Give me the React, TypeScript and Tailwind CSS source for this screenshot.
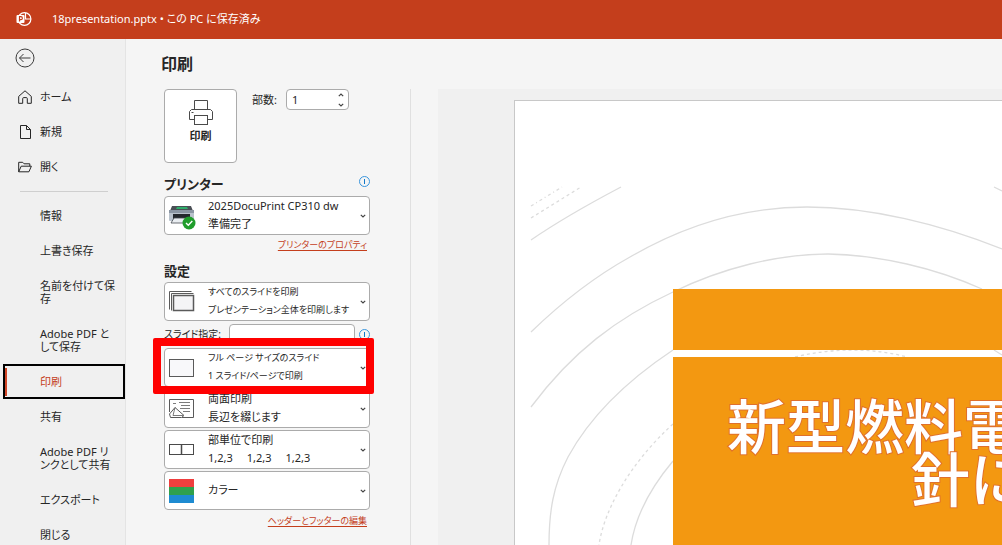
import { useId, useState, type ReactNode } from "react";

type NavEntry = { label: string; icon?: ReactNode };

const line = { fill: "none", stroke: "currentColor", strokeWidth: 1 } as const;

function AppLogo() {
  return (
    <svg width="16" height="16" viewBox="0 0 16 16" className="text-white" aria-hidden="true">
      <circle cx="8.500" cy="8" r="6.400" fill="none" stroke="currentColor" strokeWidth="1.200" />
      <path d="M9.500 2v6H15" fill="none" stroke="currentColor" strokeWidth="1.200" />
      <rect x="0.500" y="4" width="8" height="8" rx="1" fill="currentColor" />
      <path d="M3.500 10.500V5.700h1.400a1.400 1.400 0 0 1 0 2.900H3.500" fill="none" stroke="#c43e1c" strokeWidth="1.200" />
    </svg>
  );
}

function HomeIcon() {
  return (
    <svg width="16" height="16" viewBox="0 0 16 16" aria-hidden="true">
      <path {...line} d="M1.700 7.400 8 1.800l6.300 5.600v6.900h-4V9.600q0-1-1-1H6.700q-1 0-1 1v4.700h-4z" strokeLinejoin="round" />
    </svg>
  );
}

function NewIcon() {
  return (
    <svg width="16" height="16" viewBox="0 0 16 16" aria-hidden="true">
      <path {...line} d="M3.500 1.500h6l4 4v9h-10zM9.500 1.500v4h4" strokeLinejoin="round" />
    </svg>
  );
}

function OpenIcon() {
  return (
    <svg width="16" height="16" viewBox="0 0 16 16" aria-hidden="true">
      <path {...line} d="M1.700 12.800V3.300h4l1.400 1.500h5.700v2.400M1.700 12.800l2.500-5.600h10.200l-2.500 5.600z" strokeLinejoin="round" />
    </svg>
  );
}

function PrinterOutline() {
  return (
    <svg width="28" height="28" viewBox="0 0 28 28" className="text-[#4a4a4a]" aria-hidden="true">
      <path {...line} d="M7.500 10.500v-9h13v9" />
      <path {...line} d="M7.500 20.500h-5v-8l2-2h19l2 2v8h-5" />
      <rect {...line} x="7.500" y="16.500" width="13" height="9" />
      <path {...line} d="M4.500 13.500h2" />
    </svg>
  );
}

function PrinterDevice() {
  return (
    <svg width="28" height="28" viewBox="0 0 28 28" aria-hidden="true">
      <path d="M4 4h19l2 5H2z" fill="#4a4f55" />
      <path d="M9 5h10l1 2H8z" fill="#2fae6b" />
      <rect x="1" y="8" width="25" height="11" rx="1" fill="#b9c2cc" />
      <rect x="1" y="8" width="25" height="3" fill="#8b96a3" />
      <rect x="5" y="12" width="17" height="5" fill="#24282d" />
      <path d="M6 16h15l1 5H3z" fill="#e9edf1" stroke="#454a50" strokeWidth="0.800" />
      <circle cx="21" cy="21" r="6.500" fill="#1f9d2b" />
      <path d="m18 21 2.300 2.300 4-4.300" fill="none" stroke="#fff" strokeWidth="1.400" />
    </svg>
  );
}

function StackIcon() {
  return (
    <svg width="28" height="24" viewBox="0 0 28 24" className="text-[#5a5a5a]" aria-hidden="true">
      <path {...line} d="M1.500 19.500v-18h22M3.500 20.500v-17h22" />
      <rect x="5.500" y="5.500" width="20" height="15" fill="#f4f4f6" stroke="currentColor" strokeWidth="1.500" />
    </svg>
  );
}

function PageIcon() {
  return (
    <svg width="28" height="24" viewBox="0 0 28 24" className="text-[#5a5a5a]" aria-hidden="true">
      <rect x="1.500" y="3.500" width="24" height="17" fill="#f8f8fa" stroke="currentColor" />
    </svg>
  );
}

function DuplexIcon() {
  return (
    <svg width="28" height="24" viewBox="0 0 28 24" className="text-[#5a5a5a]" aria-hidden="true">
      <path {...line} d="M1.500 15V2.500h24v18H14" />
      <path {...line} d="m1.500 17 5.500-6.500 9 8-2.500 2h-11z" />
      <path {...line} d="m7 10.500-2 8 10 0" strokeWidth="0.800" />
      <path {...line} d="M5 6.500h3M11 5.500h11M13 8.500h9M12 11.500h10M15 14.500h7" strokeWidth="0.800" />
    </svg>
  );
}

function CollateIcon() {
  return (
    <svg width="28" height="24" viewBox="0 0 28 24" className="text-[#4a4a4a]" aria-hidden="true">
      <rect {...line} x="1.500" y="6.500" width="24" height="10" />
      <path d="M13.500 6v11" stroke="currentColor" strokeWidth="1.500" />
    </svg>
  );
}

function ColorIcon() {
  return (
    <svg width="28" height="28" viewBox="0 0 28 28" aria-hidden="true">
      <rect x="1" y="2" width="25" height="8" fill="#ef3e3e" />
      <rect x="1" y="10" width="25" height="8" fill="#2fa04c" />
      <rect x="1" y="18" width="25" height="8" fill="#1e8bd1" />
    </svg>
  );
}

function Chevron({ up = false }: { up?: boolean }) {
  return (
    <svg width="6" height="4" viewBox="0 0 6 4" className="text-[#444444]" aria-hidden="true">
      <path d={up ? "M.8 3.200 3 1l2.200 2.200" : "M.8.800 3 3 5.200.800"} fill="none" stroke="currentColor" strokeWidth="1.200" />
    </svg>
  );
}

function InfoButton({ label }: { label: string }) {
  return (
    <button type="button" aria-label={label} className="flex size-[11px] items-center justify-center rounded-full border border-[#3a96dd]">
      <span className="h-[5px] w-px bg-[#0f78c8]" />
    </button>
  );
}

function DropDown({
  name,
  value,
  detail,
  icon,
  dense = false,
  highlighted = false,
}: {
  name: string;
  value: string;
  detail?: ReactNode;
  icon: ReactNode;
  dense?: boolean;
  highlighted?: boolean;
}) {
  const id = useId();
  return (
    <div className={"relative grid grid-cols-1 " + (dense ? "text-[9px]" : "text-[11px]")}>
      <select
        aria-label={name}
        aria-describedby={detail ? id : undefined}
        className={
          "col-start-1 row-start-1 h-[39px] w-full min-w-0 appearance-none rounded border border-[#ababab] bg-white pr-4 pl-[43px] leading-4 text-[#262626] " +
          (detail ? "pb-[19px]" : "pb-[2px]")
        }
      >
        <option>{value}</option>
      </select>
      <div className="pointer-events-none col-start-1 row-start-1 flex min-w-0 pr-1 pl-1">
        <div className="flex w-10 items-center">{icon}</div>
        <div id={id} className="flex min-w-0 flex-1 items-end pb-[3px] leading-4 whitespace-nowrap">
          {detail}
        </div>
        <div className="flex items-center">
          <Chevron />
        </div>
      </div>
      {highlighted && (
        <div className="pointer-events-none absolute -top-[10px] -right-[4px] -bottom-[7px] -left-[11px] z-10 rounded-xs border-8 border-[#ff0000]" />
      )}
    </div>
  );
}

const topNav: NavEntry[] = [
  { label: "ホーム", icon: <HomeIcon /> },
  { label: "新規", icon: <NewIcon /> },
  { label: "開く", icon: <OpenIcon /> },
];

const fileNav: NavEntry[] = [
  { label: "情報" },
  { label: "上書き保存" },
  { label: "名前を付けて保存" },
  { label: "Adobe PDF として保存" },
  { label: "印刷" },
  { label: "共有" },
  { label: "Adobe PDF リンクとして共有" },
  { label: "エクスポート" },
  { label: "閉じる" },
];

function Sidebar() {
  return (
    <nav className="w-[126px] shrink-0 overflow-hidden border-r border-[#e4e4e4] bg-[#f0f0f0] pl-[3px] leading-[13px]">
      <button type="button" aria-label="戻る" className="mt-[9px] ml-3 block text-[#3c3c3c]">
        <svg width="20" height="20" viewBox="0 0 20 20" aria-hidden="true">
          <circle {...line} cx="10" cy="10" r="9" />
          <path {...line} d="M15.500 10h-11M8.500 6l-4 4 4 4" />
        </svg>
      </button>
      <ul className="mt-[11px]">
        {topNav.map((entry) => (
          <li key={entry.label}>
            <a href="#" className="flex h-[35px] items-center gap-[7px] pl-[14px]">
              {entry.icon}
              {entry.label}
            </a>
          </li>
        ))}
      </ul>
      <hr className="mt-[7px] mr-[17px] mb-[6px] ml-[17px] border-[#cfcfcf]" />
      <ul>
        {fileNav.map((entry) =>
          entry.label === "印刷" ? (
            <li key={entry.label}>
              <a href="#" aria-current="page" className="flex h-[35px] items-center border-2 border-black text-[#c43e1c]">
                <span className="h-7 w-[2px] bg-[#d04526]" />
                <span className="pl-[33px]">{entry.label}</span>
              </a>
            </li>
          ) : (
            <li key={entry.label}>
              <a href="#" className="block py-[11px] pr-[9px] pl-[37px] break-all">
                {entry.label}
              </a>
            </li>
          ),
        )}
      </ul>
    </nav>
  );
}

function PrintSettings() {
  const [copies, setCopies] = useState(1);
  return (
    <section className="w-[244px] shrink-0 pl-[38px]">
      <div className="flex gap-[15px]">
        <button
          type="button"
          className="flex h-[74px] w-[73px] flex-col items-center gap-px rounded border border-[#ababab] bg-white pt-[9px] font-bold"
        >
          <PrinterOutline />
          印刷
        </button>
        <div className="flex h-[21px] items-center gap-[9px]">
          <label htmlFor="copies">部数:</label>
          <div className="flex h-[21px] w-[63px] items-center rounded border border-[#ababab] bg-white pr-1 pl-[5px]">
            <input
              id="copies"
              inputMode="numeric"
              value={copies}
              onChange={(event) => setCopies(Number(event.target.value) || 1)}
              className="w-0 flex-1 outline-none"
            />
            <div className="flex flex-col gap-[6px]">
              <button type="button" aria-label="増やす" onClick={() => setCopies(copies + 1)}>
                <Chevron up />
              </button>
              <button type="button" aria-label="減らす" onClick={() => setCopies(Math.max(1, copies - 1))}>
                <Chevron />
              </button>
            </div>
          </div>
        </div>
      </div>

      <div className="mt-[11px] mb-[2px] flex h-5 items-center justify-between">
        <h2 className="text-[13px] font-bold">プリンター</h2>
        <div className="-mt-[6px]">
          <InfoButton label="プリンターの情報" />
        </div>
      </div>
      <DropDown name="プリンター" value="2025DocuPrint CP310 dw" detail="準備完了" icon={<PrinterDevice />} />
      <div className="mt-[2px] pr-[3px] text-right text-[9px] leading-4">
        <a href="#" className="text-[#c43e1c] underline underline-offset-2">
          プリンターのプロパティ
        </a>
      </div>

      <h2 className="mt-2 mb-px text-[13px] leading-5 font-bold">設定</h2>
      <DropDown
        name="印刷範囲"
        value="すべてのスライドを印刷"
        detail="プレゼンテーション全体を印刷します"
        icon={<StackIcon />}
        dense
      />
      <div className="mt-[3px] mb-1 flex h-5 items-center">
        <label htmlFor="slides" className="w-[65px] text-[10px] whitespace-nowrap">
          スライド指定:
        </label>
        <input id="slides" className="h-5 w-0 flex-1 rounded border border-[#ababab] bg-white px-1" />
        <div className="ml-1">
          <InfoButton label="スライド指定の情報" />
        </div>
      </div>
      <div className="flex flex-col gap-[2px]">
        <DropDown
          name="印刷レイアウト"
          value="フル ページ サイズのスライド"
          detail="1 スライド/ページで印刷"
          icon={<PageIcon />}
          dense
          highlighted
        />
        <DropDown name="両面印刷" value="両面印刷" detail="長辺を綴じます" icon={<DuplexIcon />} />
        <DropDown
          name="印刷単位"
          value="部単位で印刷"
          detail={
            <span className="flex gap-[14px]">
              <span>1,2,3</span>
              <span>1,2,3</span>
              <span>1,2,3</span>
            </span>
          }
          icon={<CollateIcon />}
        />
        <DropDown name="色" value="カラー" icon={<ColorIcon />} />
      </div>
      <div className="mt-[3px] pr-[3px] text-right text-[9px] leading-4">
        <a href="#" className="text-[#c43e1c] underline underline-offset-2">
          ヘッダーとフッターの編集
        </a>
      </div>
    </section>
  );
}

function SlidePreview() {
  return (
    <section className="ml-[27px] flex min-w-0 flex-1 overflow-hidden bg-[#f0f0f0] pt-[11px] pl-[76px]">
      <div className="relative flex min-w-0 flex-1 flex-col overflow-hidden border-t border-l border-[#c8c8c8] bg-white pt-[188px] pl-[158px]">
        <svg
          width="487"
          height="444"
          viewBox="515 101 487 444"
          className="absolute top-0 left-0"
          fill="none"
          stroke="#dcdcdc"
          strokeWidth="1.300"
          aria-hidden="true"
        >
          <path d="M531 206 562 187" strokeDasharray="3 3 1 3" />
          <path d="M531 218 581 187" strokeDasharray="3 3" />
          <path d="M531 240C560 220 585 206 621 187" />
          <path d="M994 187l8 4" />
          <path d="M531 332C562 302 594 277 630 257 690 222 750 207 807 207 870 207 940 224 1002 249" />
          <path d="M531 407C572 352 617 318 673 292 722 268 778 254 828 254 880 255 935 268 982 289" />
          <path d="M673 350C622 384 587 422 568 457 553 486 549 512 549 545M994 350l8 5" />
          <path d="M673 424C630 463 604 510 599 545" strokeDasharray="3 3" />
          <path d="M673 461C647 492 635 519 631 545" />
          <path d="M795 357Q853 343 907 357" strokeDasharray="3 3" />
        </svg>
        <div className="relative h-[61px] bg-[#f39811]" />
        <div className="relative mt-[7px] flex-1 overflow-hidden bg-[#f39811] pt-[43px] pl-[54px]">
          <h1 className="text-[59px] leading-[53px] font-medium whitespace-nowrap text-white [-webkit-text-stroke:2px_#e0702c] [paint-order:stroke_fill]">
            <span className="block">新型燃料電</span>
            <span className="block pl-[184px]">針に</span>
          </h1>
        </div>
      </div>
    </section>
  );
}

export default function App() {
  return (
    <div
      lang="ja"
      className="flex h-screen flex-col overflow-hidden bg-[#f5f5f5] font-['Noto_Sans','Noto_Sans_CJK_JP',sans-serif] text-[11px] leading-4 text-[#262626] [font-feature-settings:'palt']"
    >
      <header className="flex h-[39px] shrink-0 items-center gap-5 bg-[#c43e1c] pb-[2px] pl-4 text-white">
        <AppLogo />
        <span>18presentation.pptx • この PC に保存済み</span>
      </header>
      <div className="flex min-h-0 flex-1">
        <Sidebar />
        <main className="flex min-w-0 flex-1 flex-col">
          <h1 className="mt-[15px] shrink-0 pl-[35px] text-base leading-5 font-bold">印刷</h1>
          <div className="mt-[15px] flex min-h-0 flex-1">
            <PrintSettings />
            <div className="ml-10 w-px shrink-0 bg-[#e0e0e0]" />
            <SlidePreview />
          </div>
        </main>
      </div>
    </div>
  );
}
